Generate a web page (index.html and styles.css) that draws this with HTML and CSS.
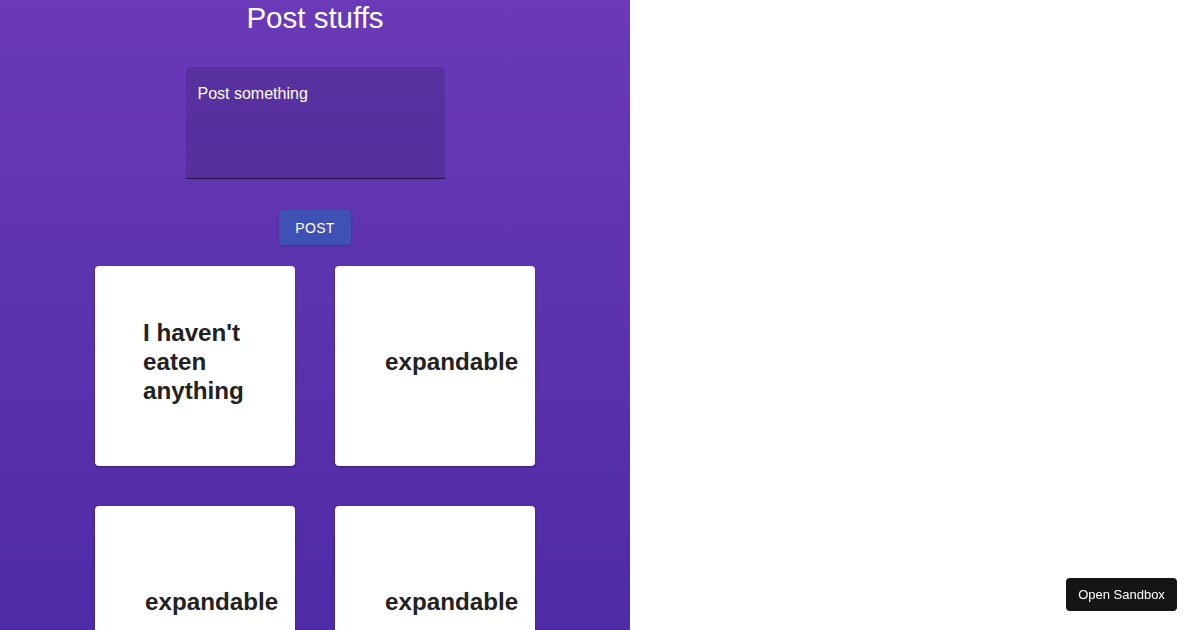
FILE: index.html
```html
<!DOCTYPE html>
<html>
<head>
<meta charset="utf-8">
<link rel="stylesheet" href="styles.css">
</head>
<body>
<div class="panel">
  <h1 class="title">Post stuffs</h1>
  <div class="field">
    <div class="field-label">Post something</div>
  </div>
  <button class="post-btn">POST</button>
  <div class="grid">
    <div class="card"><div class="card-text">I haven't eaten anything</div></div>
    <div class="card"><div class="card-text single">expandable</div></div>
    <div class="card"><div class="card-text single">expandable</div></div>
    <div class="card"><div class="card-text single">expandable</div></div>
  </div>
</div>
<a class="sandbox-btn">Open Sandbox</a>
</body>
</html>
```
FILE: styles.css
```css
html, body {
  margin: 0;
  padding: 0;
  height: 100%;
  overflow: hidden;
  background: #ffffff;
  font-family: "Liberation Sans", Arial, sans-serif;
}
.panel {
  width: 630px;
  height: 630px;
  overflow: hidden;
  background: linear-gradient(to bottom, #6a3ab8 0%, #4f2ba6 100%);
  display: flex;
  flex-direction: column;
  align-items: center;
}
.panel > * {
  flex-shrink: 0;
}
.title {
  margin: 0;
  padding-top: 1px;
  height: 35px;
  line-height: 34px;
  font-size: 29.5px;
  font-weight: normal;
  color: #ffffff;
}
.field {
  margin-top: 31px;
  width: 259px;
  height: 111px;
  background: rgba(0, 0, 0, 0.12);
  border-radius: 4px 4px 0 0;
  border-bottom: 1px solid rgba(20, 10, 50, 0.75);
  box-sizing: content-box;
}
.field-label {
  padding: 17px 12px 0;
  font-size: 16px;
  line-height: 19px;
  color: #ffffff;
}
.post-btn {
  margin-top: 31px;
  width: 72px;
  height: 35px;
  border: none;
  border-radius: 4px;
  background: #3f51b5;
  color: #ffffff;
  font-family: "Liberation Sans", Arial, sans-serif;
  font-size: 14px;
  letter-spacing: 0.3px;
  box-shadow: 0 1px 3px rgba(0, 0, 0, 0.2);
}
.grid {
  margin-top: 21px;
  display: grid;
  grid-template-columns: 200px 200px;
  column-gap: 40px;
  row-gap: 40px;
}
.card {
  width: 200px;
  height: 200px;
  background: #ffffff;
  border-radius: 4px;
  box-shadow: 0 1px 3px rgba(0, 0, 0, 0.25), 0 1px 1px rgba(0, 0, 0, 0.14);
  display: flex;
  align-items: center;
  box-sizing: border-box;
  padding-bottom: 10px;
}
.card-text {
  margin-left: 48px;
  width: 104px;
  font-size: 24.2px;
  line-height: 29px;
  font-weight: bold;
  color: #222222;
  white-space: normal;
}
.card-text.single {
  margin-left: 50px;
}
.sandbox-btn {
  position: fixed;
  right: 23px;
  bottom: 19px;
  width: 111px;
  height: 33px;
  line-height: 33px;
  text-align: center;
  background: #151515;
  color: #ffffff;
  font-size: 13px;
  border-radius: 4px;
  box-shadow: 0 0 0 1px rgba(255, 255, 255, 0.1);
}
```
